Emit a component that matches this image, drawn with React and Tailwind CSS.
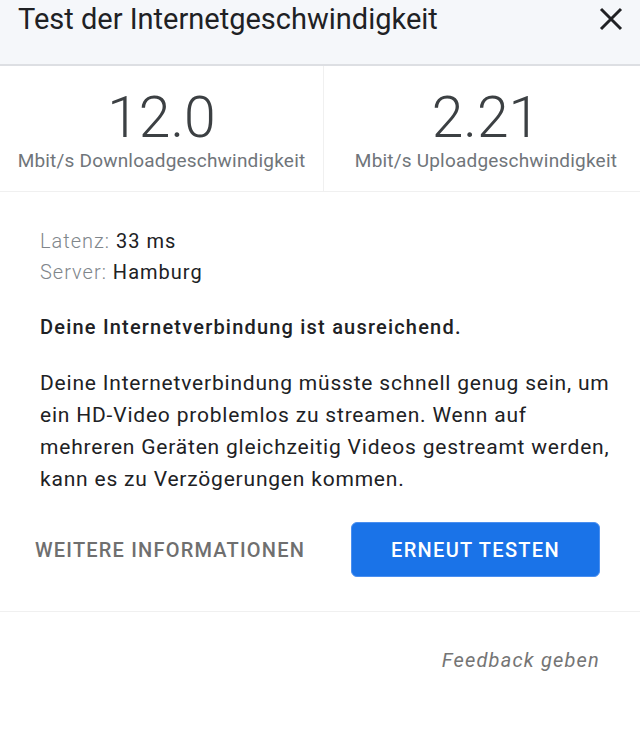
import React from 'react';

const App = () => {
    return (
        <div className="w-[640px] h-[749px] bg-white overflow-hidden" style={{ fontFamily: 'Roboto, "Noto Sans", sans-serif' }}>
            {/* Header */}
            <div className="h-[66px] bg-[#f5f7fa] border-b-2 border-[#dddfe3] flex items-start justify-between pl-[18px] pr-[14px]">
                <h1 className="text-[29px] leading-[38px] text-[#202124]">Test der Internetgeschwindigkeit</h1>
                <svg width="30" height="30" viewBox="0 0 24 24" className="mt-[4px]">
                    <path d="M4 4 L20 20 M20 4 L4 20" stroke="#202124" strokeWidth="2.4" fill="none" />
                </svg>
            </div>

            {/* Speeds */}
            <div className="flex border-b border-[#f0f0f0]">
                <div className="w-[324px] h-[125px] flex flex-col items-center pt-[20px] border-r border-[#f0f0f0]">
                    <div className="text-[57px] leading-[64px] font-light text-[#3c4043]">12.0</div>
                    <div className="text-[19px] leading-[22px] tracking-[0.2px] text-[#70757a]">Mbit/s Downloadgeschwindigkeit</div>
                </div>
                <div className="flex-1 h-[125px] flex flex-col items-center pt-[20px] pl-[8px]">
                    <div className="text-[57px] leading-[64px] font-light text-[#3c4043]">2.21</div>
                    <div className="text-[19px] leading-[22px] tracking-[0.2px] text-[#70757a]">Mbit/s Uploadgeschwindigkeit</div>
                </div>
            </div>

            {/* Details */}
            <div className="pl-[40px] pr-[20px] pt-[34px]">
                <div className="text-[20px] leading-[31px] tracking-[1px]">
                    <div><span className="font-light text-[#80868b]">Latenz:</span> <span className="text-[#202124]">33 ms</span></div>
                    <div><span className="font-light text-[#80868b]">Server:</span> <span className="text-[#202124]">Hamburg</span></div>
                </div>
                <p className="mt-[26px] text-[20px] leading-[26px] tracking-[1.2px] font-medium text-[#202124]">Deine Internetverbindung ist ausreichend.</p>
                <p className="mt-[27px] text-[21px] leading-[32px] tracking-[0.8px] text-[#202124] whitespace-nowrap">
                    Deine Internetverbindung müsste schnell genug sein, um<br />
                    ein HD-Video problemlos zu streamen. Wenn auf<br />
                    mehreren Geräten gleichzeitig Videos gestreamt werden,<br />
                    kann es zu Verzögerungen kommen.
                </p>
            </div>

            {/* Buttons */}
            <div className="flex items-center justify-between pl-[35px] pr-[40px] mt-[27px]">
                <button className="text-[20px] font-medium text-[#6f6f6f] tracking-[1.2px]">WEITERE INFORMATIONEN</button>
                <button className="w-[249px] h-[55px] rounded-[6px] bg-[#1a73e8] border border-[#4a8ff0] text-white text-[20px] font-medium tracking-[1.3px]">ERNEUT TESTEN</button>
            </div>

            {/* Footer */}
            <div className="mt-[34px] border-t border-[#f0f0f0] flex justify-end pr-[40px] pt-[33px]">
                <span className="text-[20px] italic tracking-[1.2px] text-[#757575]">Feedback geben</span>
            </div>
        </div>
    );
};

export default App;
